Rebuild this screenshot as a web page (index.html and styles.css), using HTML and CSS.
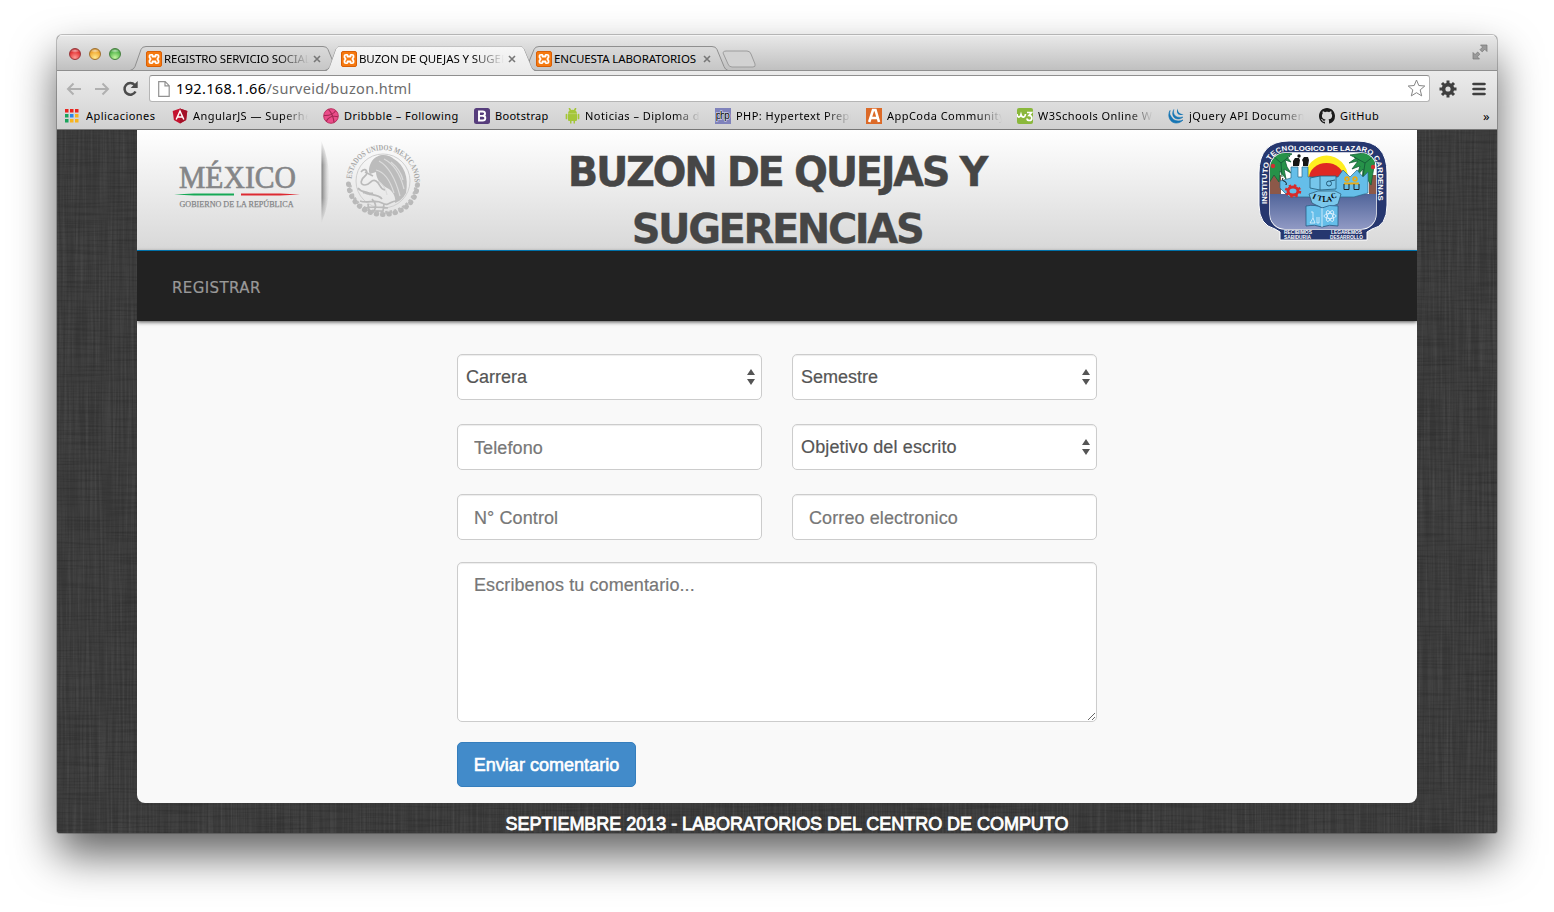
FILE: index.html
```html
<!DOCTYPE html>
<html lang="es">
<head>
<meta charset="utf-8">
<title>BUZON DE QUEJAS Y SUGERENCIAS</title>
<link rel="stylesheet" href="styles.css">
</head>
<body>
<svg class="defs" width="0" height="0">
  <defs>
    <linearGradient id="tabOff" x1="0" y1="0" x2="0" y2="1"><stop offset="0" stop-color="#dadada"/><stop offset="1" stop-color="#c6c6c6"/></linearGradient>
    <linearGradient id="tabOn" x1="0" y1="0" x2="0" y2="1"><stop offset="0" stop-color="#f6f6f6"/><stop offset="1" stop-color="#ebebeb"/></linearGradient>
    <symbol id="xampp" viewBox="0 0 16 16">
      <rect x=".5" y=".5" width="15" height="15" rx="1.500" fill="#f6790f" stroke="#d85f06"/>
      <path d="M6.500 5.200V4.400C6.500 3.600 3.500 3.600 3.500 4.800V6.300L4.600 8 3.500 9.700V11.200C3.500 12.400 6.500 12.400 6.500 11.600V10.500H9.500V11.600C9.500 12.400 12.500 12.400 12.500 11.200V9.700L11.400 8 12.500 6.300V4.800C12.500 3.600 9.500 3.600 9.500 4.400V5.500H6.500Z" fill="none" stroke="#fff" stroke-width="1.800" stroke-linejoin="round"/>
    </symbol>
  </defs>
</svg>
<div class="window">
  <div class="titlebar">
    <svg class="tab-shapes" width="1440" height="36" viewBox="57 35 1440 36">
      <path d="M723 52.500q1-1.500 3-1.500h21q3 0 4 3l4 10q1 3-2 3h-21q-3 0-4-3l-4.500-10q-.5-1-.5-1.500Z" fill="#d2d2d2" stroke="#9c9c9c"/>
      <path d="M523 70.500q3-1 4-4l7-17q1-3 5-3h173q4 0 5 3l7 17q1 3 4 4Z" fill="url(#tabOff)" stroke="#8f8f8f"/>
      <path d="M130 70.500q4-1 5-4l6-17q1-3 5-3h177q4 0 5 3l7 17q1 3 4 4Z" fill="url(#tabOff)" stroke="#8f8f8f"/>
      <path d="M57 70.500H325q4-1 5-4l6-17q1-3 5-3h178q4 0 5 3l7 17q1 4 5 4H1497" fill="none" stroke="#8f8f8f"/>
      <path d="M325 71.500q4-1 5-5l6-17q1-3 5-3h178q4 0 5 3l7 17q1 4 5 5Z" fill="url(#tabOn)"/>
    </svg>
    <div class="lights"><i class="light red"></i><i class="light amber"></i><i class="light green"></i></div>
    <div class="tabs">
      <div class="tab"><svg width="16" height="16"><use href="#xampp"/></svg><span class="tab-title fade t1">REGISTRO SERVICIO SOCIAL</span><svg class="close" width="8" height="8"><path d="m1 1 6 6m0-6-6 6"/></svg></div>
      <div class="tab"><svg width="16" height="16"><use href="#xampp"/></svg><span class="tab-title fade t2">BUZON DE QUEJAS Y SUGERENCIAS</span><svg class="close" width="8" height="8"><path d="m1 1 6 6m0-6-6 6"/></svg></div>
      <div class="tab"><svg width="16" height="16"><use href="#xampp"/></svg><span class="tab-title t3">ENCUESTA LABORATORIOS</span><svg class="close" width="8" height="8"><path d="m1 1 6 6m0-6-6 6"/></svg></div>
    </div>
    <svg class="expand" width="16" height="16" viewBox="0 0 16 16"><path d="M8.500 1H15v6.500l-2.200-2.200-2.600 2.600-2.200-2.200 2.600-2.600ZM1 8.500V15h6.500l-2.200-2.200 2.600-2.600-2.200-2.200-2.600 2.600Z" fill="#9a9a9a" stroke="#777" stroke-width=".7"/></svg>
  </div>
  <div class="toolbar">
    <div class="nav-icons">
      <svg width="16" height="14" viewBox="0 0 16 14"><path d="M15 7H2M7.500 1.500 2 7l5.500 5.500" fill="none" stroke="#b0b0b0" stroke-width="2"/></svg>
      <svg width="16" height="14" viewBox="0 0 16 14"><path d="M1 7h13M8.500 1.500 14 7l-5.500 5.500" fill="none" stroke="#b0b0b0" stroke-width="2"/></svg>
      <svg width="16" height="16" viewBox="0 0 16 16"><path d="M13.500 10.500A5.800 5.800 0 1 1 12.700 4" fill="none" stroke="#4b4b4b" stroke-width="2.500"/><path d="M15.700 0v7H8.700Z" fill="#4b4b4b"/></svg>
    </div>
    <div class="omnibox">
      <svg width="12" height="16" viewBox="0 0 12 16"><path d="M.7.7h6.500l4 4v10.600H.7Zm6.300 0v4.200h4.200" fill="#fff" stroke="#929292" stroke-width="1.200"/></svg>
      <span class="url"><b>192.168.1.66</b>/surveid/buzon.html</span>
      <svg class="star" width="19" height="19" viewBox="0 0 19 19"><path d="m9.500 1 2.300 5.500 6 .5-4.600 3.900 1.500 6-5.200-3.200-5.200 3.200 1.500-6L1.200 7l6-.5Z" fill="#fff" stroke="#858585" stroke-linejoin="round"/></svg>
    </div>
    <svg class="gear" width="18" height="18" viewBox="-9 -9 18 18"><g stroke="#3f3f3f" stroke-width="3"><path d="M0-8.500v17M-8.500 0h17M-6-6 6 6M6-6-6 6"/></g><circle r="6.200" fill="#3f3f3f"/><circle r="2.600" fill="#dedede"/></svg>
    <svg class="menu" width="14" height="14" viewBox="0 0 14 14"><path d="M1.500 2h11M1.500 7h11m-11 5h11" stroke="#3f3f3f" stroke-width="2.600" stroke-linecap="round"/></svg>
  </div>
  <div class="bookmarks">
    <div class="bm"><svg width="14" height="14" viewBox="0 0 14 14"><path d="M0 0h3.500v3.500H0zM5 0h3.500v3.500H5zM10 0h3.500v3.500H10z" fill="#e8251f"/><path d="M0 5h3.500v3.500H0zM0 10h3.500v3.500H0z" fill="#19a45b"/><path d="M5 5h3.500v3.500H5z" fill="#2d85e8"/><path d="M10 5h3.500v3.500H10zM5 10h3.500v3.500H5zM10 10h3.500v3.500H10z" fill="#f8b41d"/></svg><span class="b1">Aplicaciones</span></div>
    <div class="bm"><svg width="16" height="16" viewBox="0 0 16 16"><path d="M8 .5 15.300 3l-1.200 9L8 15.500 1.900 12 .7 3Z" fill="#c4122f"/><path d="M8 .5v15l6.100-3.500 1.200-9Z" fill="#a31128"/><path d="M4.200 11.500 8 3l3.800 8.500M5.800 9h4.400" fill="none" stroke="#fff" stroke-width="1.500"/></svg><span class="fade">AngularJS — Superheroic</span></div>
    <div class="bm"><svg width="16" height="16" viewBox="0 0 16 16"><circle cx="8" cy="8" r="7.300" fill="#ea4c89" stroke="#b8305f"/><path d="M5.500 1.300C9 5 10.500 9 11 14.500M1 7.500c5 .3 9-1 11.500-4.500M3.200 13.500C5.500 9 10 7.500 15 8.800" fill="none" stroke="#a32853" stroke-width="1.100"/></svg><span>Dribbble – Following</span></div>
    <div class="bm"><svg width="16" height="16" viewBox="0 0 16 16"><rect width="16" height="16" rx="2.500" fill="#563d7c"/><path d="M5 3.500h3.600c3.200 0 3.200 4 .3 4.300C12.300 8 12 12.500 8.700 12.500H5Zm0 4.400h4" fill="none" stroke="#fff" stroke-width="1.900"/></svg><span class="b4">Bootstrap</span></div>
    <div class="bm"><svg width="15" height="16" viewBox="0 0 15 16"><path d="M3 5.500C3 .5 12 .5 12 5.500V12q0 1-1 1h-1v2.500H8.500V13h-2v2.500H5V13H4q-1 0-1-1Z" fill="#a4c639"/><path d="M1.500 6.500v4m12-4v4M4.500.7l1 2m5-2-1 2" stroke="#a4c639" stroke-width="1.700" stroke-linecap="round"/><path d="M3 5.700h9" stroke="#c9dc8c" stroke-width=".6"/></svg><span class="fade">Noticias – Diploma de</span></div>
    <div class="bm"><svg width="16" height="16" viewBox="0 0 16 16"><rect width="16" height="16" fill="#7f82bb"/><text x=".8" y="11" font-family="Liberation Sans" font-size="10" textLength="14.500" fill="#000" stroke="#e5e6f4" stroke-width="1.200" paint-order="stroke">php</text></svg><span class="fade">PHP: Hypertext Preprocessor</span></div>
    <div class="bm"><svg width="16" height="16" viewBox="0 0 16 16"><rect width="16" height="16" fill="#dc6a28"/><path d="M3.200 14 7 2h2.500L13 14M4.500 10h7" fill="none" stroke="#fff" stroke-width="2.600"/></svg><span class="fade">AppCoda Community</span></div>
    <div class="bm"><svg width="16" height="16" viewBox="0 0 16 16"><rect width="16" height="16" rx="2" fill="#8ab83c"/><path d="M0 6c.5 4 3 4 4 .5C5 10 8 10 8.500 6M10 4.500h4.500L12 7.500c4 0 3.500 5 .5 5-1.500 0-2.500-.8-2.500-2" fill="none" stroke="#fff" stroke-width="1.700"/></svg><span class="fade">W3Schools Online Web</span></div>
    <div class="bm"><svg width="16" height="16" viewBox="0 0 16 16"><path d="M2 2.500C-1 8 2 15 8 15c3 0 5-1 7-3-3 1.500-8 1.500-10.500-1.500S1 6 2 2.500Z" fill="#1676b5" stroke="#1676b5" stroke-width=".7"/><path d="M5.800 1.500C3 6 5.500 11 10 11c2 0 3.500-.5 5-2-4 1-7.500 0-8.800-2.500-.7-1.500-.9-3-.4-5Z" fill="#1676b5" stroke="#1676b5" stroke-width=".5"/><path d="M9.700.5C8 3.500 9.500 7 12.500 7c1.200 0 2-.3 3-1-3 .3-6-1.500-5.800-5.500Z" fill="#1676b5"/></svg><span class="fade">jQuery API Documentation</span></div>
    <div class="bm"><svg width="16" height="16" viewBox="0 0 16 16"><path fill="#1b1b1b" d="M8 0C3.580 0 0 3.580 0 8c0 3.540 2.290 6.530 5.470 7.590.4.070.55-.17.55-.38 0-.19-.01-.82-.01-1.490-2.010.37-2.530-.49-2.690-.94-.09-.23-.48-.94-.82-1.130-.28-.15-.68-.52-.01-.53.63-.01 1.080.58 1.230.82.72 1.210 1.870.87 2.330.66.07-.52.28-.87.51-1.070-1.780-.2-3.640-.89-3.640-3.950 0-.87.31-1.590.82-2.150-.08-.2-.36-1.020.08-2.120 0 0 .67-.21 2.200.82.64-.18 1.320-.27 2-.27s1.360.09 2 .27c1.530-1.040 2.200-.82 2.200-.82.44 1.100.16 1.920.08 2.120.51.56.82 1.270.82 2.150 0 3.070-1.870 3.750-3.650 3.950.29.25.54.73.54 1.480 0 1.070-.01 1.930-.01 2.200 0 .21.15.46.55.38A8.010 8.010 0 0 0 16 8c0-4.420-3.580-8-8-8Z"/></svg><span>GitHub</span></div>
    <div class="more">»</div>
  </div>
  <div class="viewport">
    <svg class="linen" width="1440" height="704">
      <filter id="warp" x="0" y="0" width="100%" height="100%"><feTurbulence type="fractalNoise" baseFrequency=".5 .012" numOctaves="2" seed="3"/><feColorMatrix values="0 0 0 0 1  0 0 0 0 1  0 0 0 0 1  .15 0 0 0 -.055"/></filter>
      <filter id="weft" x="0" y="0" width="100%" height="100%"><feTurbulence type="fractalNoise" baseFrequency=".02 .5" numOctaves="2" seed="8"/><feColorMatrix values="0 0 0 0 0  0 0 0 0 0  0 0 0 0 0  .35 0 0 0 -.15"/></filter>
      <rect width="1440" height="704" fill="#393939"/>
      <rect width="1440" height="704" filter="url(#warp)"/>
      <rect width="1440" height="704" filter="url(#weft)"/>
    </svg>
    <main class="page">
      <header class="banner">
        <svg width="320" height="120" viewBox="137 130 320 120">
          <defs>
            <linearGradient id="foldX"><stop offset="0" stop-color="#808080"/><stop offset=".5" stop-color="#aaa" stop-opacity=".6"/><stop offset="1" stop-color="#ccc" stop-opacity="0"/></linearGradient>
            <linearGradient id="foldY" x1="0" y1="0" x2="0" y2="1"><stop offset="0" stop-color="#000"/><stop offset=".3" stop-color="#fff"/><stop offset=".7" stop-color="#fff"/><stop offset="1" stop-color="#000"/></linearGradient>
            <mask id="foldMask"><rect x="318" y="140" width="14" height="83" fill="url(#foldY)"/></mask>
            <path id="sealArc" d="M351.500 179A31.600 31.600 0 0 1 414.500 184"/>
          </defs>
          <g fill="#858688" font-family="Liberation Serif">
            <text x="179" y="188" font-size="32" textLength="117" lengthAdjust="spacingAndGlyphs" stroke="#858688" stroke-width=".7">MÉXICO</text>
            <text x="179.500" y="207" font-size="8.800" textLength="114" lengthAdjust="spacingAndGlyphs" stroke="#858688" stroke-width=".25">GOBIERNO DE LA REPÚBLICA</text>
          </g>
          <path d="m174 194.500 20-1h40v2h-40Z" fill="#16a956"/><path d="m300 194.500-20-1h-39v2h39Z" fill="#dd2a32"/>
          <path d="M321.500 141q8 20 8 41t-8 41Z" fill="url(#foldX)" mask="url(#foldMask)"/>
          <text font-family="Liberation Serif" font-size="8" font-weight="bold" fill="#a6a6a6"><textPath href="#sealArc" textLength="97" lengthAdjust="spacingAndGlyphs">ESTADOS&#160;UNIDOS&#160;MEXICANOS</textPath></text>
          <circle cx="383" cy="181" r="27" fill="none" stroke="#cfcfcf"/>
          <path d="M348.500 184c1 18 16 30.500 34.500 30.500s34-12 34.500-30.500" fill="none" stroke="#b9b9b9" stroke-width="5" stroke-linecap="round" stroke-dasharray=".5 5.800"/>
          <path d="M350 185c2 17 15 27.500 33 27.500s31-10 33-27.500" fill="none" stroke="#bcbcbc" stroke-width="3" stroke-dasharray="2.500 2"/>
          <path d="M372 161c6-8 16-7 22-2 10 6 15 18 12 34-3 6-8 9-11 10 1-5-1-10-6-14-8-4-13-10-13-17l-6 2c-2-3-1-8 2-13Z" fill="#bcbcbc"/>
          <path d="M379 161c9 5 16 16 21 35m-16-37c10 5 16 14 20 30m-13-27c6 5 10 10 12 18m-27-10c8 2 14 10 18 23m-16-12c6 4 8 8 9 14" fill="none" stroke="#dcdcdc" stroke-width="1.200"/>
          <path d="M361 172c5-6 8 1 4 4s-6 9 0 9 6-7 11-4 3 8 9 9m-27-2c4 6 10 2 12 7m-5-23 8 4m-9 16c5 4 14 1 18 7m-22 2c7 3 15-2 22 2s8-2 14-2m-33-8c4-3 6 2 10 0m-9 15q12-2 24 0m-20-4 1 7h14l1-7m-12-5q6 6 2 12" fill="none" stroke="#bababa" stroke-width="1.700"/>
        </svg>
        <h1>BUZON DE QUEJAS Y SUGERENCIAS</h1>
        <svg width="320" height="120" viewBox="1097 130 320 120">
          <defs>
            <linearGradient id="sea" x1="0" y1="0" x2="0" y2="1"><stop offset="0" stop-color="#51659a"/><stop offset="1" stop-color="#929bc5"/></linearGradient>
            <path id="crestArc" d="M1268 204V174Q1268 150.500 1292 150.500H1355Q1378.500 150.500 1378.500 174V206" transform="translate(-.5 0)"/>
            <clipPath id="crestIn"><rect x="1270" y="153" width="106" height="76" rx="15"/></clipPath>
          </defs>
          <path d="M1289 141h68q30 0 30 32v32q0 21-15 24l-5 3v8h-87v-8l-5-3q-16-4-16-24v-32q0-32 30-32Z" fill="#26376f" stroke="#fff"/>
          <rect x="1270" y="153" width="106" height="76" rx="15" fill="#fff" stroke="#fff" stroke-width="1.500"/>
          <g clip-path="url(#crestIn)">
            <path d="M1270 175h11v22h-11zM1369 175h9v22h-9z" fill="#8c5848"/>
            <path d="M1305 178a20 21 0 0 1 43 0Z" fill="#ffee20"/><path d="M1309 178a17.500 15 0 0 1 35 0Z" fill="#df2824"/>
            <path d="M1270 154l12-2 10 2-5 3 4 5-6-2 2 7 4 6-7-4 2 10-6-8-1 11-5-7-5 8Zm106 0-12-1-14 2 6 3-7 5 9-2-6 8 8-3-3 10 6-7-1 14 4-6 5 8Z" fill="#269249" stroke="#17603a" stroke-width=".8"/>
            <path d="m1272 155 9 8 9-7m-9 7 1 14m92-21-9 7-11-6m11 6-2 14" fill="none" stroke="#17603a"/>
            <circle cx="1273" cy="166" r="2.200" fill="#cf3131"/><circle cx="1373" cy="167" r="2.200" fill="#cf3131"/>
            <rect x="1270" y="194" width="106" height="36" fill="url(#sea)"/>
            <path d="M1280 181l11-3v-11h7v10h4v-10h6v10h30l5-7 7 7 7-7 6 7 5-5v21l-14 4h-65l-9-9Z" fill="#65bee9" stroke="#286787" stroke-width=".7"/>
            <path d="M1293 166v-5l2-3h4l1 2-1 6Zm10 0v-4l-1-2 2-3h4l1 3-1 6Z" fill="#151515"/>
            <circle cx="1299" cy="156" r="1.700" fill="#151515"/>
            <path d="M1283 178c-3 4 5 2 3 7" fill="none" stroke="#111"/>
            <ellipse cx="1293" cy="191" rx="5" ry="4" fill="none" stroke="#d72b2b" stroke-width="3"/><ellipse cx="1293" cy="191" rx="7" ry="5.500" fill="none" stroke="#d72b2b" stroke-width="2.500" stroke-dasharray="2.400 2.600"/>
            <path d="M1310 178l10-2h16v13l-16 1-10-2Z" fill="#76c6eb" stroke="#245a77" stroke-width=".8"/>
            <path d="M1320 176v14" stroke="#245a77" stroke-width=".8"/><circle cx="1329" cy="183.500" r="2.500" fill="none" stroke="#245a77"/><path d="m1330 181 5-1" stroke="#245a77"/>
            <g fill="none" stroke="#e9ab16" stroke-width="1.800"><circle cx="1347" cy="179" r="1.800"/><circle cx="1355" cy="179" r="1.800"/><path d="M1344 183.500h15"/></g>
            <path d="M1344 184v5.500h5V184m5 0v5.500h5V184" fill="none" stroke="#222"/>
            <path d="m1309 194 9-3h17l6 3-3 10-10 4h-6l-10-5Z" fill="#7bc8ec" stroke="#28556f" stroke-width=".7"/>
            <text x="1312 1317 1322.500 1327 1332" y="198 200 202 202 199" font-family="Liberation Serif" font-size="7.500" font-weight="bold" rotate="25 12 0 -8 -20">ITLAC</text>
            <path d="M1306 206q10-2 16 2 7-4 16-2v20q-9-2-16 1-7-3-16-1Z" fill="#65bee9" stroke="#295b83" stroke-width=".8"/>
            <path d="M1322 208v19m-11-15h2v6l-3 5h5l-2-5m4-1v6h2v-6" fill="none" stroke="#e4f4ff" stroke-width=".8"/>
            <g fill="none" stroke="#e8f5ff" stroke-width=".8"><ellipse cx="1330" cy="216" rx="6" ry="2.500"/><ellipse cx="1330" cy="216" rx="6" ry="2.500" transform="rotate(60 1330 216)"/><ellipse cx="1330" cy="216" rx="6" ry="2.500" transform="rotate(120 1330 216)"/></g>
          </g>
          <g fill="#fff" font-family="Liberation Sans" font-weight="bold">
            <text font-size="7.200"><textPath href="#crestArc" textLength="196" lengthAdjust="spacingAndGlyphs">INSTITUTO TECNOLOGICO DE LAZARO CARDENAS</textPath></text>
            <g font-size="4.500"><text x="1284" y="234.200" textLength="28" lengthAdjust="spacingAndGlyphs">RECIBIMOS</text><text x="1284" y="239" textLength="27" lengthAdjust="spacingAndGlyphs">SABIDURIA</text><text x="1331" y="234.200" textLength="31" lengthAdjust="spacingAndGlyphs">LEGAREMOS</text><text x="1330" y="239" textLength="33" lengthAdjust="spacingAndGlyphs">DESARROLLO</text></g>
          </g>
        </svg>
      </header>
      <nav class="navbar"><a>REGISTRAR</a></nav>
      <form class="form">
        <div class="fields">
          <label class="select-wrap"><select><option>Carrera</option></select><svg class="updown" width="8" height="16" viewBox="0 0 8 16"><path d="m4 0 4 6H0Zm0 16L0 10h8Z" fill="#555"/></svg></label>
          <label class="select-wrap"><select><option>Semestre</option></select><svg class="updown" width="8" height="16" viewBox="0 0 8 16"><path d="m4 0 4 6H0Zm0 16L0 10h8Z" fill="#555"/></svg></label>
          <input type="text" placeholder="Telefono">
          <label class="select-wrap"><select class="wide"><option>Objetivo del escrito</option></select><svg class="updown" width="8" height="16" viewBox="0 0 8 16"><path d="m4 0 4 6H0Zm0 16L0 10h8Z" fill="#555"/></svg></label>
          <input type="text" placeholder="N° Control">
          <input type="text" placeholder="Correo electronico">
        </div>
        <textarea placeholder="Escribenos tu comentario..."></textarea>
        <button type="button">Enviar comentario</button>
      </form>
    </main>
    <footer class="footer">SEPTIEMBRE 2013 - LABORATORIOS DEL CENTRO DE COMPUTO</footer>
  </div>
</div>
</body>
</html>
```
FILE: styles.css
```css
* { box-sizing: border-box; }
body { margin: 0; height: 912px; padding: 35px 57px 0; background: #fff; overflow: hidden; font-family: "Liberation Sans", Arial, sans-serif; }
svg { display: block; flex: none; }
.defs { position: absolute; }
.window { width: 1440px; height: 798px; display: flex; flex-direction: column; overflow: hidden; border-radius: 5px 5px 3px 3px; background: #393939; box-shadow: 0 0 0 1px rgba(0,0,0,.22), 0 22px 44px rgba(0,0,0,.62); font-family: "Noto Sans", sans-serif; }
.titlebar { position: relative; height: 36px; flex: none; display: flex; background: linear-gradient(#e9e9e9, #bfbfbf); box-shadow: inset 0 1px #f5f5f5; }
.tab-shapes { position: absolute; inset: 0; }
.lights { position: relative; display: flex; gap: 8px; padding: 13px 0 0 12px; width: 89px; }
.light { width: 12px; height: 12px; border-radius: 50%; border: 1px solid; }
.red { background: radial-gradient(ellipse 5px 2px at 50% 18%, #fff9, transparent), radial-gradient(circle at 50% 85%, #ff9a94, #e5393a 60%, #a71d22); border-color: #98363a; }
.amber { background: radial-gradient(ellipse 5px 2px at 50% 18%, #fff9, transparent), radial-gradient(circle at 50% 85%, #ffe98f, #f2ac35 60%, #ad711b); border-color: #a1712f; }
.green { background: radial-gradient(ellipse 5px 2px at 50% 18%, #fff9, transparent), radial-gradient(circle at 50% 85%, #c4f6a0, #5dbb52 60%, #2f7d2e); border-color: #46803f; }
.tabs { position: relative; display: flex; padding-top: 16px; height: 32px; }
.tab { width: 195px; display: flex; align-items: center; height: 16px; }
.tab-title { margin-left: 2px; width: 145px; overflow: hidden; white-space: nowrap; font-size: 11.5px; line-height: 16px; color: #000; }
.t1 { letter-spacing: -.2px; }
.t2 { letter-spacing: -.1px; }
.t3 { letter-spacing: -.12px; }
.fade { -webkit-mask-image: linear-gradient(90deg, #000 78%, transparent 100%); mask-image: linear-gradient(90deg, #000 78%, transparent 100%); }
.close { margin-left: 4px; fill: none; stroke: #777; stroke-width: 1.6; }
.expand { position: relative; margin: 9px 9px 0 auto; }
.toolbar { height: 31px; flex: none; display: flex; align-items: center; padding: 4px 11px 0 9px; background: linear-gradient(#ebebeb, #dedede); }
.nav-icons { display: flex; align-items: center; gap: 12px; width: 83px; }
.omnibox { width: 1281px; height: 27px; display: flex; align-items: center; padding: 0 3px 0 8px; background: #fff; border: 1px solid #b5b5b5; border-top-color: #8f8f8f; border-radius: 3px; }
.url { margin: -2px auto 0 6px; font-size: 14.5px; line-height: 20px; color: #6d6d6d; letter-spacing: .34px; }
.url b { font-weight: 400; color: #000; }
.gear { margin-left: 9px; }
.menu { margin-left: auto; }
.bookmarks { height: 28px; flex: none; display: grid; grid-template-columns: 107px 151px 151px 91px 150px 151px 151px 151px 151px 151px 1fr; padding: 0 7px 0 8px; align-items: center; background: linear-gradient(#dedede, #d0d0d0); border-bottom: 1px solid #777; font-size: 11px; line-height: 16px; letter-spacing: .46px; color: #000; }
.bm { display: flex; align-items: center; gap: 5px; }
.bm:first-child { gap: 7px; }
.bm span { max-width: 115px; overflow: hidden; white-space: nowrap; }
.b4 { letter-spacing: .3px; }
.more { text-align: right; font-size: 13px; }
.viewport { position: relative; flex: 1; min-height: 0; overflow: hidden; padding: 0 80px; }
.linen { position: absolute; inset: 0; }
.page { position: relative; height: 673px; background: #f9f9f9; border-radius: 0 0 8px 8px; overflow: hidden; }
.banner { height: 121px; display: grid; grid-template-columns: 320px 640px 320px; background: linear-gradient(#fff, #d8d8d8); border-bottom: 1px solid #0088cc; }
.banner h1 { margin: 0; padding: 14px 100px 0; text-align: center; font: bold 40px/57px "DejaVu Sans", sans-serif; letter-spacing: -2.4px; color: #464646; -webkit-text-stroke: .3px #464646; }
.navbar { height: 70px; display: flex; align-items: center; padding: 3px 35px 0; background: #222; box-shadow: 0 1px 4px rgba(0,0,0,.7); font: 15px/20px "DejaVu Sans", sans-serif; letter-spacing: .4px; color: #999; -webkit-text-stroke: .2px #999; }
.form { width: 640px; margin: 33px auto 0; font: 18px/24px "Liberation Sans", Arial, sans-serif; }
.fields { display: grid; grid-template-columns: 305px 305px; gap: 24px 30px; }
.select-wrap { position: relative; display: block; }
input, select, textarea { display: block; width: 100%; height: 46px; margin: 0; padding: 2px 16px 0; font: inherit; color: #555; background: #fff; border: 1px solid #ccc; border-radius: 5px; box-shadow: inset 0 1px 1px rgba(0,0,0,.075); }
select { appearance: none; padding: 0 8px; -webkit-text-stroke: .2px #555; }
select.wide { letter-spacing: .13px; }
input::placeholder, textarea::placeholder { color: #777; opacity: 1; letter-spacing: .1px; -webkit-text-stroke: .2px #777; }
.updown { position: absolute; right: 7px; top: 15px; }
textarea { height: 160px; margin-top: 22px; padding: 10px 16px; resize: vertical; }
button { display: block; width: 179px; height: 45px; margin-top: 20px; padding: 0; background: #428bca; border: 1px solid #357ebd; border-radius: 5px; color: #fff; font: inherit; letter-spacing: .03px; -webkit-text-stroke: .6px #fff; }
.footer { position: relative; padding: 8px 0 0 20px; text-align: center; white-space: nowrap; font: 18px/26px "Liberation Sans", Arial, sans-serif; letter-spacing: -.03px; color: #fff; -webkit-text-stroke: .8px #fff; }
```
